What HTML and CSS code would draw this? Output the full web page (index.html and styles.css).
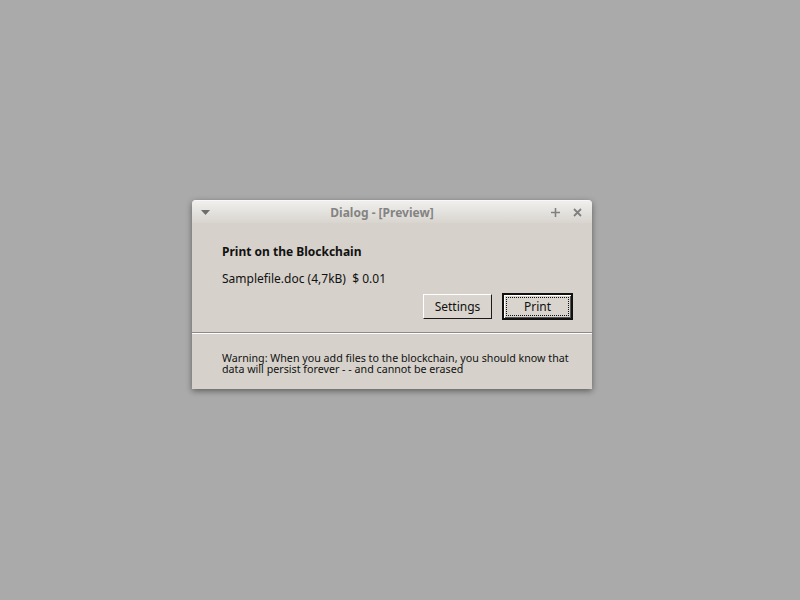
FILE: index.html
```html
<!DOCTYPE html>
<html>
<head>
<meta charset="utf-8">
<link rel="stylesheet" href="styles.css">
</head>
<body>
<div class="dialog">
  <div class="titlebar">
    <span class="menu-arrow"><svg width="9" height="5" viewBox="0 0 9 5"><path d="M0 0h9L4.5 5z" fill="#6d6d6d"/></svg></span>
    <span class="title">Dialog - [Preview]</span>
    <span class="tb-btns">
      <svg width="9" height="9" viewBox="0 0 9 9"><path d="M4.5 0v9M0 4.5h9" stroke="#808080" stroke-width="1.6"/></svg>
      <svg width="9" height="9" viewBox="0 0 9 9"><path d="M1 1l7 7M8 1l-7 7" stroke="#808080" stroke-width="1.8"/></svg>
    </span>
  </div>
  <div class="content">
    <div class="heading">Print on the Blockchain</div>
    <div class="fileline">Samplefile.doc (4,7kB)&nbsp;&nbsp;$ 0.01</div>
    <div class="buttons">
      <button class="btn">Settings</button>
      <button class="btn default"><span class="focus">Print</span></button>
    </div>
  </div>
  <div class="separator"></div>
  <div class="warning">
    <div class="wline">Warning: When you add files to the blockchain, you should know that</div>
    <div class="wline">data will persist forever - - and cannot be erased</div>
  </div>
</div>
</body>
</html>
```

FILE: styles.css
```css
html, body {
  margin: 0;
  padding: 0;
  width: 800px;
  height: 600px;
  background: #aaaaaa;
  font-family: "Noto Sans", "Open Sans", sans-serif;
}
body {
  display: flex;
  justify-content: center;
  padding-top: 200px;
  box-sizing: border-box;
}
.dialog {
  width: 400px;
  height: 189px;
  margin-left: -16px;
  background: #d6d2cb;
  border-radius: 4px 4px 0 0;
  box-shadow: 0 2px 6px rgba(0,0,0,0.45);
  display: flex;
  flex-direction: column;
  overflow: hidden;
}
.titlebar {
  height: 23px;
  background: linear-gradient(#f0efed, #d8d5cf);
  display: flex;
  align-items: center;
  padding: 0 10px 0 9px;
  border-top: 1px solid #f8f8f8;
  box-sizing: border-box;
}
.menu-arrow {
  display: flex;
  width: 10px;
  margin-top: 1px;
}
.title {
  flex: 1;
  text-align: center;
  font-size: 12px;
  font-weight: bold;
  color: #838383;
  margin-left: 2px;
}
.tb-btns {
  display: flex;
  gap: 13px;
  align-items: center;
}
.content {
  padding: 20px 19px 0 30px;
  height: 109px;
  box-sizing: border-box;
  display: flex;
  flex-direction: column;
}
.heading {
  font-size: 12px;
  font-weight: bold;
  color: #111;
  line-height: 18px;
}
.fileline {
  font-size: 12px;
  color: #111;
  margin-top: 9px;
  line-height: 18px;
}
.buttons {
  display: flex;
  justify-content: flex-end;
  gap: 10px;
  margin-top: 5px;
  align-items: center;
}
.btn {
  font-family: "Noto Sans", "Open Sans", sans-serif;
  font-size: 12px;
  color: #111;
  background: #d9d5ce;
  border: 1px solid;
  border-color: #ffffff #1a1a1a #1a1a1a #ffffff;
  padding: 0;
  height: 25px;
  width: 69px;
  box-sizing: border-box;
  line-height: 21px;
}
.btn.default {
  width: 71px;
  height: 27px;
  border: 2px solid #111;
  box-shadow: inset 1px 1px 0 #ffffff, inset -1px -1px 0 #555;
  padding: 2px;
}
.focus {
  display: block;
  border: 1px dotted #111;
  height: 100%;
  box-sizing: border-box;
  line-height: 17px;
}
.separator {
  height: 1px;
  background: #8a8a8a;
  border-bottom: 1px solid #fdfdfd;
}
.warning {
  padding: 19px 0 0 30px;
  font-size: 10.7px;
  color: #111;
}
.wline {
  line-height: 11px;
  height: 11px;
  white-space: nowrap;
}
```
